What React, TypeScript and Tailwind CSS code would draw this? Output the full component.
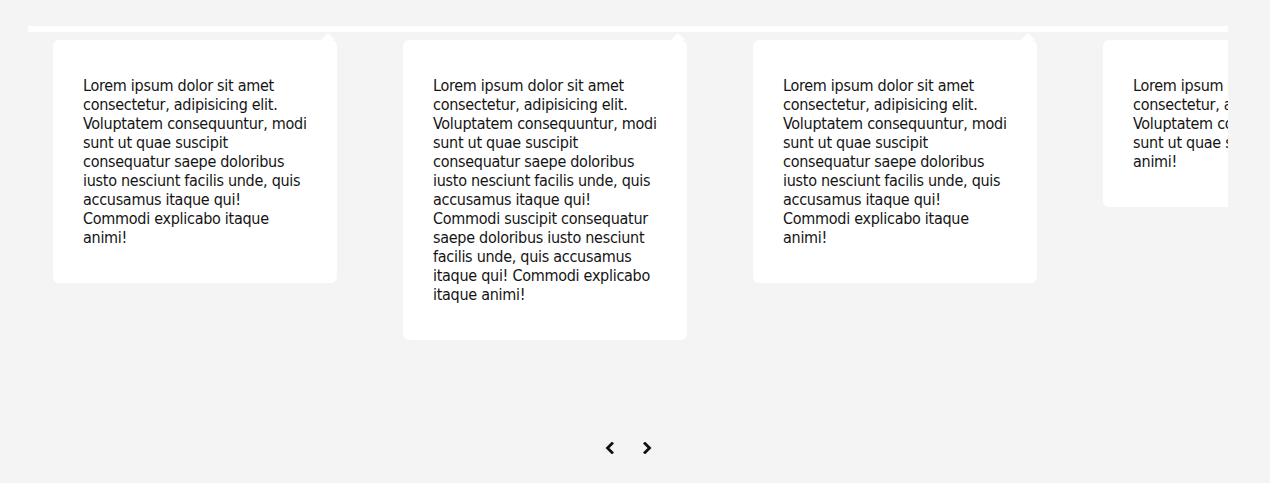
const LINES_A = [
  "Lorem ipsum dolor sit amet",
  "consectetur, adipisicing elit.",
  "Voluptatem consequuntur, modi",
  "sunt ut quae suscipit",
  "consequatur saepe doloribus",
  "iusto nesciunt facilis unde, quis",
  "accusamus itaque qui!",
  "Commodi explicabo itaque",
  "animi!",
];

const LINES_B = [
  "Lorem ipsum dolor sit amet",
  "consectetur, adipisicing elit.",
  "Voluptatem consequuntur, modi",
  "sunt ut quae suscipit",
  "consequatur saepe doloribus",
  "iusto nesciunt facilis unde, quis",
  "accusamus itaque qui!",
  "Commodi suscipit consequatur",
  "saepe doloribus iusto nesciunt",
  "facilis unde, quis accusamus",
  "itaque qui! Commodi explicabo",
  "itaque animi!",
];

const LINES_C = [
  "Lorem ipsum dolor sit amet",
  "consectetur, adipisicing elit.",
  "Voluptatem consequuntur, modi",
  "sunt ut quae suscipit",
  "animi!",
];

const slides = [LINES_A, LINES_B, LINES_A, LINES_C];

function Card({ lines }: { lines: string[] }) {
  return (
    <div className="relative w-[284px] rounded-[6px] bg-white px-[30px] py-[36px]">
      <span className="absolute -top-[7px] right-[2px] h-0 w-0 border-x-[7px] border-b-[7px] border-x-transparent border-b-white" />
      <p className="whitespace-nowrap text-[16px] leading-[19px] tracking-[-0.28px] text-[#141414]">
        {lines.map((l, i) => (
          <span key={i} className="block">
            {l}
          </span>
        ))}
      </p>
    </div>
  );
}

function Chevron({ dir }: { dir: "left" | "right" }) {
  return (
    <svg width="12" height="12" viewBox="0 0 12 12" fill="none">
      <polyline
        points={dir === "left" ? "8,1.5 3.5,6 8,10.5" : "4,1.5 8.5,6 4,10.5"}
        stroke="#111"
        strokeWidth="2.8"
        strokeLinecap="square"
        strokeLinejoin="miter"
      />
    </svg>
  );
}

export default function App() {
  return (
    <div
      className="h-[483px] bg-[#f4f4f4] pt-[26px]"
      style={{ fontFamily: '"DejaVu Sans Condensed", "DejaVu Sans", sans-serif', fontStretch: "condensed" }}
    >
      <div className="mx-[28px] w-[1200px] overflow-hidden">
        <div className="h-[6px] bg-white" />
        <div className="flex h-[308px] items-start pt-[8px]">
          {slides.map((s, i) => (
            <div key={i} className="w-[350px] shrink-0 pl-[25px]">
              <Card lines={s} />
            </div>
          ))}
        </div>
        <div className="mt-[102px] flex items-center justify-center gap-[25px]">
          <Chevron dir="left" />
          <Chevron dir="right" />
        </div>
      </div>
    </div>
  );
}
